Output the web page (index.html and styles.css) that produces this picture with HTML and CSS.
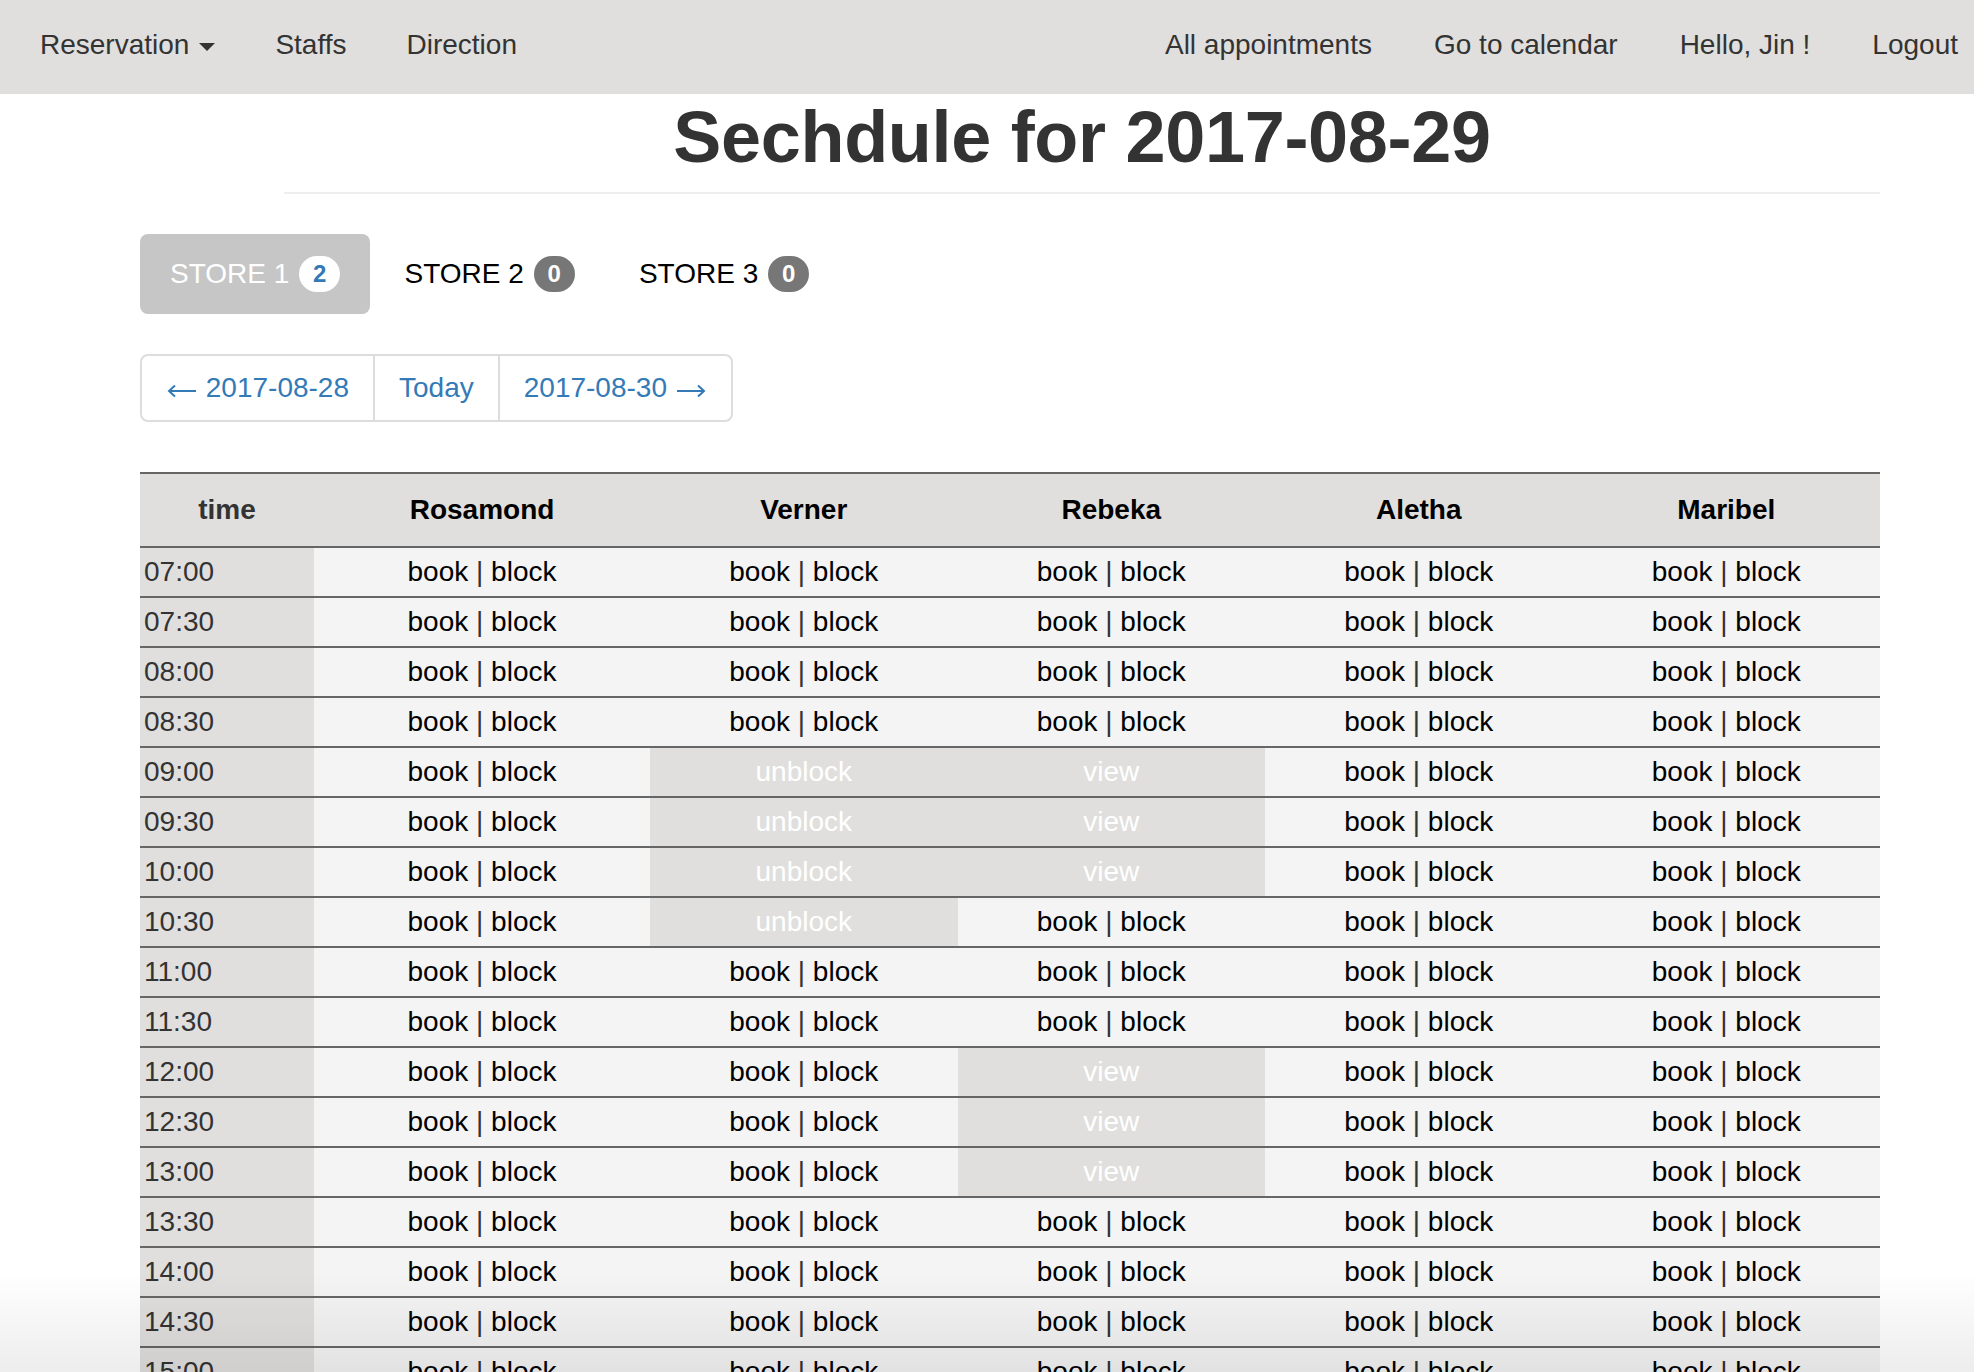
FILE: index.html
```html
<!DOCTYPE html>
<html lang="en">
<head>
<meta charset="utf-8">
<title>Schedule</title>
<link rel="stylesheet" href="styles.css">
</head>
<body>
<nav class="navbar">
  <div class="nav-left">
    <a class="nav-link" href="#">Reservation<span class="caret"></span></a>
    <a class="nav-link" href="#">Staffs</a>
    <a class="nav-link" href="#">Direction</a>
  </div>
  <div class="nav-right">
    <a class="nav-link" href="#">All appointments</a>
    <a class="nav-link" href="#">Go to calendar</a>
    <a class="nav-link" href="#">Hello, Jin !</a>
    <a class="nav-link last" href="#">Logout</a>
  </div>
</nav>

<div class="container">
  <div class="page-header">
    <h1>Sechdule for 2017-08-29</h1>
  </div>

  <ul class="pills">
    <li class="pill active"><a href="#">STORE 1 <span class="badge">2</span></a></li>
    <li class="pill"><a href="#">STORE 2 <span class="badge">0</span></a></li>
    <li class="pill"><a href="#">STORE 3 <span class="badge">0</span></a></li>
  </ul>

  <div class="pager">
    <a href="#"><svg class="arrow" width="32" height="14" viewBox="0 0 32 14"><path d="M30 7H3M9 1.5L3 7l6 5.5" fill="none" stroke="#337ab7" stroke-width="2"/></svg> 2017-08-28</a>
    <a href="#">Today</a>
    <a href="#">2017-08-30 <svg class="arrow" width="32" height="14" viewBox="0 0 32 14"><path d="M2 7h27M23 1.5L29 7l-6 5.5" fill="none" stroke="#337ab7" stroke-width="2"/></svg></a>
  </div>

  <table class="schedule">
    <colgroup>
      <col class="c-time"><col class="c-wide"><col class="c-std"><col class="c-std"><col class="c-std"><col class="c-std">
    </colgroup>
    <thead>
      <tr><th class="th-time">time</th><th>Rosamond</th><th>Verner</th><th>Rebeka</th><th>Aletha</th><th>Maribel</th></tr>
    </thead>
    <tbody>
      <tr><td class="t">07:00</td><td><a>book</a> | <a>block</a></td><td><a>book</a> | <a>block</a></td><td><a>book</a> | <a>block</a></td><td><a>book</a> | <a>block</a></td><td><a>book</a> | <a>block</a></td></tr>
      <tr><td class="t">07:30</td><td><a>book</a> | <a>block</a></td><td><a>book</a> | <a>block</a></td><td><a>book</a> | <a>block</a></td><td><a>book</a> | <a>block</a></td><td><a>book</a> | <a>block</a></td></tr>
      <tr><td class="t">08:00</td><td><a>book</a> | <a>block</a></td><td><a>book</a> | <a>block</a></td><td><a>book</a> | <a>block</a></td><td><a>book</a> | <a>block</a></td><td><a>book</a> | <a>block</a></td></tr>
      <tr><td class="t">08:30</td><td><a>book</a> | <a>block</a></td><td><a>book</a> | <a>block</a></td><td><a>book</a> | <a>block</a></td><td><a>book</a> | <a>block</a></td><td><a>book</a> | <a>block</a></td></tr>
      <tr><td class="t">09:00</td><td><a>book</a> | <a>block</a></td><td class="blocked">unblock</td><td class="blocked">view</td><td><a>book</a> | <a>block</a></td><td><a>book</a> | <a>block</a></td></tr>
      <tr><td class="t">09:30</td><td><a>book</a> | <a>block</a></td><td class="blocked">unblock</td><td class="blocked">view</td><td><a>book</a> | <a>block</a></td><td><a>book</a> | <a>block</a></td></tr>
      <tr><td class="t">10:00</td><td><a>book</a> | <a>block</a></td><td class="blocked">unblock</td><td class="blocked">view</td><td><a>book</a> | <a>block</a></td><td><a>book</a> | <a>block</a></td></tr>
      <tr><td class="t">10:30</td><td><a>book</a> | <a>block</a></td><td class="blocked">unblock</td><td><a>book</a> | <a>block</a></td><td><a>book</a> | <a>block</a></td><td><a>book</a> | <a>block</a></td></tr>
      <tr><td class="t">11:00</td><td><a>book</a> | <a>block</a></td><td><a>book</a> | <a>block</a></td><td><a>book</a> | <a>block</a></td><td><a>book</a> | <a>block</a></td><td><a>book</a> | <a>block</a></td></tr>
      <tr><td class="t">11:30</td><td><a>book</a> | <a>block</a></td><td><a>book</a> | <a>block</a></td><td><a>book</a> | <a>block</a></td><td><a>book</a> | <a>block</a></td><td><a>book</a> | <a>block</a></td></tr>
      <tr><td class="t">12:00</td><td><a>book</a> | <a>block</a></td><td><a>book</a> | <a>block</a></td><td class="blocked">view</td><td><a>book</a> | <a>block</a></td><td><a>book</a> | <a>block</a></td></tr>
      <tr><td class="t">12:30</td><td><a>book</a> | <a>block</a></td><td><a>book</a> | <a>block</a></td><td class="blocked">view</td><td><a>book</a> | <a>block</a></td><td><a>book</a> | <a>block</a></td></tr>
      <tr><td class="t">13:00</td><td><a>book</a> | <a>block</a></td><td><a>book</a> | <a>block</a></td><td class="blocked">view</td><td><a>book</a> | <a>block</a></td><td><a>book</a> | <a>block</a></td></tr>
      <tr><td class="t">13:30</td><td><a>book</a> | <a>block</a></td><td><a>book</a> | <a>block</a></td><td><a>book</a> | <a>block</a></td><td><a>book</a> | <a>block</a></td><td><a>book</a> | <a>block</a></td></tr>
      <tr><td class="t">14:00</td><td><a>book</a> | <a>block</a></td><td><a>book</a> | <a>block</a></td><td><a>book</a> | <a>block</a></td><td><a>book</a> | <a>block</a></td><td><a>book</a> | <a>block</a></td></tr>
      <tr><td class="t">14:30</td><td><a>book</a> | <a>block</a></td><td><a>book</a> | <a>block</a></td><td><a>book</a> | <a>block</a></td><td><a>book</a> | <a>block</a></td><td><a>book</a> | <a>block</a></td></tr>
      <tr><td class="t">15:00</td><td><a>book</a> | <a>block</a></td><td><a>book</a> | <a>block</a></td><td><a>book</a> | <a>block</a></td><td><a>book</a> | <a>block</a></td><td><a>book</a> | <a>block</a></td></tr>
      <tr><td class="t">15:30</td><td><a>book</a> | <a>block</a></td><td><a>book</a> | <a>block</a></td><td><a>book</a> | <a>block</a></td><td><a>book</a> | <a>block</a></td><td><a>book</a> | <a>block</a></td></tr>
      <tr><td class="t">16:00</td><td><a>book</a> | <a>block</a></td><td><a>book</a> | <a>block</a></td><td><a>book</a> | <a>block</a></td><td><a>book</a> | <a>block</a></td><td><a>book</a> | <a>block</a></td></tr>
    </tbody>
  </table>
</div>
<div class="bottom-shade"></div>
</body>
</html>
```

FILE: styles.css
```css
html, body {
  margin: 0;
  padding: 0;
  background: #ffffff;
  overflow-x: hidden;
}
body {
  font-family: "Liberation Sans", Arial, Helvetica, sans-serif;
  font-size: 28px;
  color: #333333;
}
a {
  text-decoration: none;
}

/* Navbar */
.navbar {
  display: flex;
  justify-content: space-between;
  align-items: flex-start;
  height: 94px;
  background: #e0dfdd;
  padding-left: 10px;
}
.nav-left, .nav-right {
  display: flex;
}
.nav-link {
  display: block;
  padding: 31px 30px 35px;
  line-height: 28px;
  color: #333333;
  white-space: nowrap;
}
.nav-right .nav-link {
  padding-left: 31px;
  padding-right: 31px;
}
.nav-right .nav-link.last {
  padding-right: 16px;
}
.caret {
  display: inline-block;
  width: 0;
  height: 0;
  margin-left: 10px;
  vertical-align: 3px;
  border-top: 8px solid #333333;
  border-left: 8px solid transparent;
  border-right: 8px solid transparent;
}

/* Container */
.container {
  margin-left: 140px;
  width: 1740px;
}
.page-header {
  margin: 3px 0 0 144px;
  padding-bottom: 15px;
  border-bottom: 2px solid #eeeeee;
}
.page-header h1 {
  margin: 0;
  font-size: 72px;
  line-height: 80px;
  font-weight: 700;
  text-align: center;
  color: #333333;
  letter-spacing: -0.3px;
}

/* Pills */
.pills {
  list-style: none;
  margin: 40px 0 0;
  padding: 0;
  display: flex;
  gap: 4px;
}
.pill a {
  display: block;
  padding: 20px 30px;
  line-height: 40px;
  border-radius: 8px;
  color: #000000;
  white-space: nowrap;
}
.pill.active a {
  background: #c6c6c6;
  color: #ffffff;
}
.badge {
  display: inline-block;
  margin-left: 2px;
  padding: 6px 14px;
  font-size: 24px;
  font-weight: 700;
  line-height: 24px;
  color: #ffffff;
  text-align: center;
  vertical-align: 1px;
  background: #777777;
  border-radius: 20px;
}
.pill.active .badge {
  background: #ffffff;
  color: #337ab7;
}

/* Pager */
.pager {
  display: inline-flex;
  margin-top: 40px;
  border: 2px solid #dddddd;
  border-radius: 8px;
}
.pager a {
  display: block;
  padding: 12px 24px;
  line-height: 40px;
  color: #337ab7;
  white-space: nowrap;
}
.pager a + a {
  border-left: 2px solid #dddddd;
}
.arrow {
  vertical-align: -1px;
}

/* Table */
.schedule {
  margin-top: 50px;
  width: 1740px;
  border-collapse: collapse;
  table-layout: fixed;
}
.c-time { width: 174px; }
.c-wide { width: 336px; }
.c-std { width: 307.5px; }
.schedule th {
  background: #e0dfdd;
  color: #000000;
  font-weight: 700;
  text-align: center;
  padding: 16px 0;
  line-height: 40px;
  border-top: 2px solid #666666;
  border-bottom: 2px solid #666666;
}
.schedule th.th-time {
  color: #333333;
}
.schedule td {
  background: #f4f4f4;
  color: #333333;
  text-align: center;
  padding: 4px 0;
  line-height: 40px;
  border-top: 2px solid #666666;
  white-space: nowrap;
}
.schedule td a {
  color: #000000;
}
.schedule td.t {
  background: #e0dfdd;
  text-align: left;
  padding-left: 4px;
  color: #333333;
}
.schedule td.blocked {
  background: #e0dfdd;
  color: #ffffff;
}

.bottom-shade {
  position: fixed;
  left: 0;
  right: 0;
  bottom: 0;
  height: 100px;
  pointer-events: none;
  background: linear-gradient(to bottom, rgba(0, 0, 0, 0), rgba(0, 0, 0, 0.07));
}
```
